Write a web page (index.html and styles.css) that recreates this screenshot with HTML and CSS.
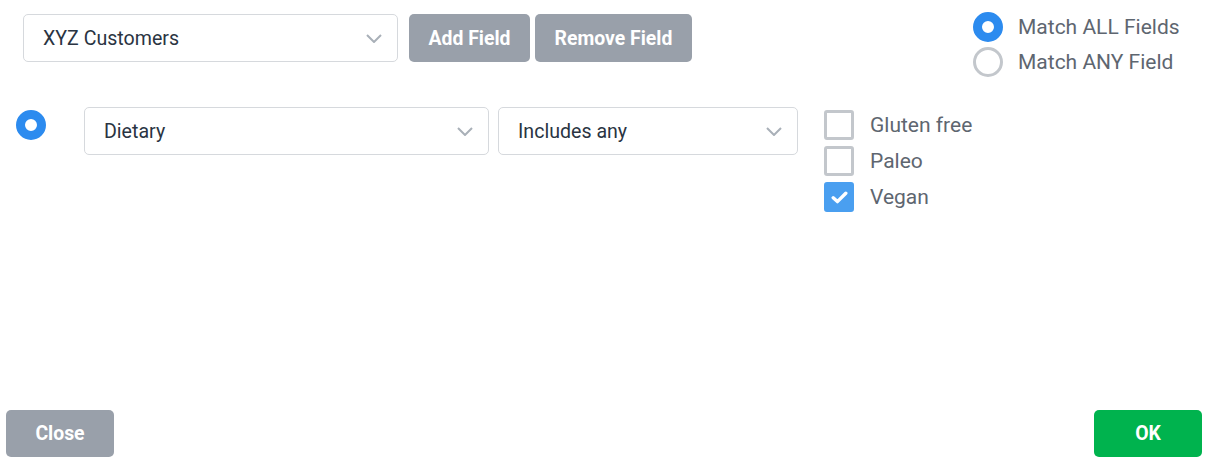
FILE: index.html
```html
<!DOCTYPE html>
<html>
<head>
<meta charset="utf-8">
<link rel="stylesheet" href="styles.css">
</head>
<body>
<div class="page">
  <div class="top">
    <div class="select select-list">
      <span class="select-text">XYZ Customers</span>
      <svg class="chev" width="16" height="9" viewBox="0 0 16 9"><path d="M1 1l7 7 7-7" fill="none" stroke="#a9b0b8" stroke-width="2"/></svg>
    </div>
    <button class="btn btn-gray btn-add">Add Field</button>
    <button class="btn btn-gray btn-remove">Remove Field</button>
    <div class="match">
      <div class="match-opt"><span class="radio radio-on"></span><span class="label">Match ALL Fields</span></div>
      <div class="match-opt"><span class="radio radio-off"></span><span class="label">Match ANY Field</span></div>
    </div>
  </div>
  <div class="rule">
    <span class="radio radio-on rule-radio"></span>
    <div class="select select-field">
      <span class="select-text">Dietary</span>
      <svg class="chev" width="16" height="9" viewBox="0 0 16 9"><path d="M1 1l7 7 7-7" fill="none" stroke="#a9b0b8" stroke-width="2"/></svg>
    </div>
    <div class="select select-op">
      <span class="select-text">Includes any</span>
      <svg class="chev" width="16" height="9" viewBox="0 0 16 9"><path d="M1 1l7 7 7-7" fill="none" stroke="#a9b0b8" stroke-width="2"/></svg>
    </div>
    <div class="checks">
      <div class="check-opt"><span class="box"></span><span class="label">Gluten free</span></div>
      <div class="check-opt"><span class="box"></span><span class="label">Paleo</span></div>
      <div class="check-opt"><span class="box box-on"><svg width="17" height="13" viewBox="0 0 17 13"><path d="M2.2 6.8l4.2 3.8 8.4-8.4" fill="none" stroke="#fff" stroke-width="3.4" stroke-linejoin="round" stroke-linecap="round"/></svg></span><span class="label">Vegan</span></div>
    </div>
  </div>
  <div class="footer">
    <button class="btn btn-gray btn-close">Close</button>
    <button class="btn btn-green btn-ok">OK</button>
  </div>
</div>
</body>
</html>
```
FILE: styles.css
```css
* { box-sizing: border-box; }
html, body { margin: 0; padding: 0; background: #fff; }
body { font-family: Roboto, "Liberation Sans", sans-serif; }
.page {
  width: 1209px;
  height: 469px;
  display: flex;
  flex-direction: column;
}
.top {
  display: flex;
  align-items: flex-start;
  padding: 14px 0 0 23px;
}
.select {
  height: 48px;
  border: 1px solid #d6d9dd;
  border-radius: 5px;
  background: #fff;
  display: flex;
  align-items: center;
  justify-content: space-between;
  padding: 0 15px 0 19px;
  flex-shrink: 0;
}
.select-text {
  font-size: 19.6px;
  color: #2a3442;
}
.chev { display: block; margin-top: 1px; }
.select-list { width: 375px; }
.btn {
  font-family: Roboto, "Liberation Sans", sans-serif;
  font-weight: bold;
  font-size: 19.4px;
  color: #fff;
  border: none;
  border-radius: 5px;
  height: 48px;
  padding: 0;
  flex-shrink: 0;
}
.btn-gray { background: #99a0aa; }
.btn-green { background: #00b34e; }
.btn-add { width: 121px; margin-left: 11px; }
.btn-remove { width: 157px; margin-left: 5px; }
.match {
  margin-left: auto;
  width: 236px;
  flex-shrink: 0;
  margin-top: -2px;
  display: flex;
  flex-direction: column;
  gap: 5px;
}
.match-opt, .check-opt {
  display: flex;
  align-items: center;
  height: 30px;
}
.radio {
  width: 30px;
  height: 30px;
  border-radius: 50%;
  flex-shrink: 0;
  display: block;
}
.radio-on { border: 9px solid #2c8bef; background: #fff; }
.radio-off { border: 3px solid #c3c7cc; background: #fff; }
.label {
  font-size: 21px;
  color: #5e6670;
  margin-left: 15px;
}
.rule {
  display: flex;
  align-items: flex-start;
  padding-left: 16px;
  margin-top: 30px;
}
.rule-radio { margin-top: 3px; }
.select-field { width: 405px; margin-left: 38px; }
.select-op { width: 300px; margin-left: 9px; }
.checks {
  margin-left: 26px;
  margin-top: 3px;
  display: flex;
  flex-direction: column;
  gap: 6px;
}
.box {
  width: 30px;
  height: 30px;
  border: 3px solid #c3c7cc;
  border-radius: 3px;
  flex-shrink: 0;
  display: flex;
  align-items: center;
  justify-content: center;
}
.box-on { background: #4a9ff0; border-color: #4a9ff0; }
.check-opt .label { margin-left: 16px; }
.footer {
  margin-top: auto;
  display: flex;
  justify-content: space-between;
  padding: 0 7px 12px 6px;
}
.btn-close { width: 108px; height: 47px; }
.btn-ok { width: 108px; height: 47px; }
```
